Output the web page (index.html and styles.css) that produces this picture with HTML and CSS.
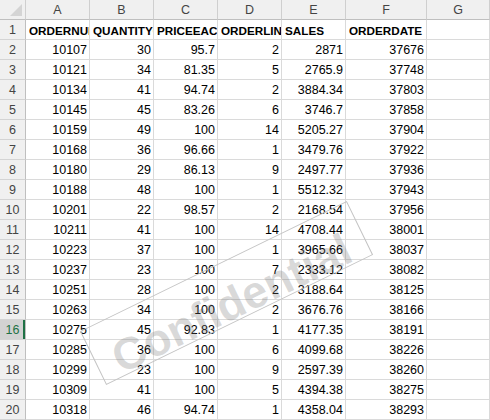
FILE: index.html
```html
<!DOCTYPE html>
<html lang="en">
<head>
    <meta charset="UTF-8">
    <title>Orders sheet</title>
    <link rel="stylesheet" href="styles.css">
</head>
<body>
    <div class="sheet-wrap">
        <table class="sheet">
            <colgroup>
                <col class="c-row"><col class="c-std"><col class="c-std"><col class="c-std"><col class="c-std"><col class="c-std"><col class="c-wide"><col>
            </colgroup>
            <thead>
                <tr>
                    <th class="corner"><span class="corner-tri"></span></th>
                    <th>A</th><th>B</th><th>C</th><th>D</th><th>E</th><th>F</th><th>G</th>
                </tr>
            </thead>
            <tbody>
                <tr class="titles">
                    <th>1</th>
                    <td>ORDERNUMBER</td><td>QUANTITYORDERED</td><td>PRICEEACH</td><td>ORDERLINENUMBER</td><td>SALES</td><td>ORDERDATE</td><td></td>
                </tr>
                <tr><th>2</th><td>10107</td><td>30</td><td>95.7</td><td>2</td><td>2871</td><td>37676</td><td></td></tr>
                <tr><th>3</th><td>10121</td><td>34</td><td>81.35</td><td>5</td><td>2765.9</td><td>37748</td><td></td></tr>
                <tr><th>4</th><td>10134</td><td>41</td><td>94.74</td><td>2</td><td>3884.34</td><td>37803</td><td></td></tr>
                <tr><th>5</th><td>10145</td><td>45</td><td>83.26</td><td>6</td><td>3746.7</td><td>37858</td><td></td></tr>
                <tr><th>6</th><td>10159</td><td>49</td><td>100</td><td>14</td><td>5205.27</td><td>37904</td><td></td></tr>
                <tr><th>7</th><td>10168</td><td>36</td><td>96.66</td><td>1</td><td>3479.76</td><td>37922</td><td></td></tr>
                <tr><th>8</th><td>10180</td><td>29</td><td>86.13</td><td>9</td><td>2497.77</td><td>37936</td><td></td></tr>
                <tr><th>9</th><td>10188</td><td>48</td><td>100</td><td>1</td><td>5512.32</td><td>37943</td><td></td></tr>
                <tr><th>10</th><td>10201</td><td>22</td><td>98.57</td><td>2</td><td>2168.54</td><td>37956</td><td></td></tr>
                <tr><th>11</th><td>10211</td><td>41</td><td>100</td><td>14</td><td>4708.44</td><td>38001</td><td></td></tr>
                <tr><th>12</th><td>10223</td><td>37</td><td>100</td><td>1</td><td>3965.66</td><td>38037</td><td></td></tr>
                <tr><th>13</th><td>10237</td><td>23</td><td>100</td><td>7</td><td>2333.12</td><td>38082</td><td></td></tr>
                <tr><th>14</th><td>10251</td><td>28</td><td>100</td><td>2</td><td>3188.64</td><td>38125</td><td></td></tr>
                <tr><th>15</th><td>10263</td><td>34</td><td>100</td><td>2</td><td>3676.76</td><td>38166</td><td></td></tr>
                <tr class="active"><th>16</th><td>10275</td><td>45</td><td>92.83</td><td>1</td><td>4177.35</td><td>38191</td><td></td></tr>
                <tr><th>17</th><td>10285</td><td>36</td><td>100</td><td>6</td><td>4099.68</td><td>38226</td><td></td></tr>
                <tr><th>18</th><td>10299</td><td>23</td><td>100</td><td>9</td><td>2597.39</td><td>38260</td><td></td></tr>
                <tr><th>19</th><td>10309</td><td>41</td><td>100</td><td>5</td><td>4394.38</td><td>38275</td><td></td></tr>
                <tr><th>20</th><td>10318</td><td>46</td><td>94.74</td><td>1</td><td>4358.04</td><td>38293</td><td></td></tr>
            </tbody>
        </table>

        <!-- watermark lies over the cells -->
        <div class="watermark"><span>Confidential</span></div>
    </div>
</body>
</html>
```

FILE: styles.css
```css
body {
    margin: 0;
    background: #fff;
    font-family: "Liberation Sans", Arial, sans-serif;
    overflow: hidden;
}
.sheet-wrap {
    position: relative;
    width: 490px;
    height: 420px;
    overflow: hidden;
}
.sheet {
    table-layout: fixed;
    border-collapse: separate;
    border-spacing: 0;
    width: 490px;
    font-size: 12.5px;
    color: #000;
}
.c-row { width: 26px; }
.c-std { width: 64px; }
.c-wide { width: 81px; }

.sheet th,
.sheet td {
    box-sizing: border-box;
    height: 20px;
    padding: 2px 2px 0 3px;
    line-height: 17px;
    border-right: 1px solid #dadada;
    border-bottom: 1px solid #dadada;
    white-space: nowrap;
    overflow: hidden;
    text-align: right;
    font-weight: normal;
}

/* column letters */
.sheet thead th {
    background: #f0f0f0;
    color: #444;
    text-align: center;
    padding: 1px 0 0 0;
    line-height: 18px;
    border-right-color: #cfcfcf;
    border-bottom-color: #bfbfbf;
}
.sheet .corner {
    padding: 0;
    vertical-align: top;
}
.corner-tri {
    display: block;
    width: 12px;
    height: 12px;
    margin: 4px 0 0 10px;
    background: #d4d4d4;
    clip-path: polygon(100% 0, 100% 100%, 0 100%);
}

/* row numbers */
.sheet tbody th {
    background: #f0f0f0;
    color: #444;
    text-align: center;
    padding: 2px 0 0 0;
    border-right-color: #bfbfbf;
    border-bottom-color: #d4d4d4;
}
.sheet tbody tr.active th {
    background: #d2d2d2;
    color: #1e7145;
    box-shadow: inset -2px 0 0 #1e7145;
}

.titles td {
    text-align: left;
    font-weight: bold;
    font-size: 11.7px;
}

.watermark {
    position: absolute;
    left: 78px;
    top: 263px;
    width: 297px;
    height: 60px;
    box-sizing: border-box;
    border: 1px solid #c4c4c4;
    transform: rotate(-26deg);
    display: flex;
    align-items: flex-end;
    justify-content: center;
    pointer-events: none;
}
.watermark span {
    font-size: 45px;
    font-weight: bold;
    line-height: 1;
    margin-bottom: -5px;
    color: rgba(120, 120, 120, 0.28);
}
```
